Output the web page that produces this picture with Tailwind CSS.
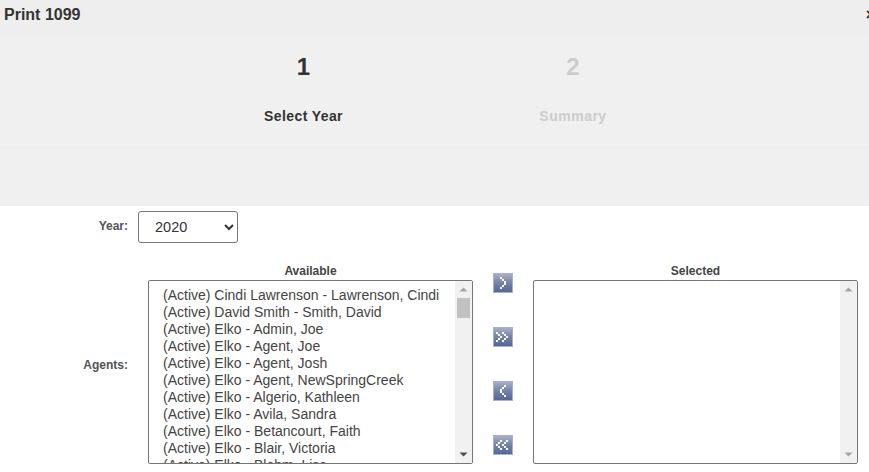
<!DOCTYPE html>
<html>
<head>
<meta charset="utf-8">
<script src="https://cdn.jsdelivr.net/npm/@tailwindcss/browser@4"></script>
</head>
<body class="bg-white overflow-hidden font-['Liberation_Sans',Arial,sans-serif] text-[#333]">
<div class="h-[472px] w-[869px] overflow-hidden">
  <header class="flex h-[35px] items-start justify-between bg-[#eeeeee] pl-1 pt-[5px]">
    <h1 class="text-base/[19px] font-bold text-[#333]">Print 1099</h1>
    <span class="mr-[-6px] text-base/[19px] font-bold text-[#333]">×</span>
  </header>
  <section class="h-[171px] bg-[#f0f0f0]">
    <div class="flex h-[110px] border-b border-[#f3f3f3] pl-[168px] pt-[18px]">
      <div class="flex w-[271px] flex-col items-center">
        <div class="text-2xl/[28px] font-bold text-[#333]">1</div>
        <div class="mt-[27px] text-sm/[16px] font-bold tracking-[0.4px] text-[#333]">Select Year</div>
      </div>
      <div class="flex w-[268px] flex-col items-center">
        <div class="text-2xl/[28px] font-bold text-[#cccccc]">2</div>
        <div class="mt-[27px] text-sm/[16px] font-bold tracking-[0.5px] text-[#cccccc]">Summary</div>
      </div>
    </div>
  </section>
  <div class="mt-[5px] flex h-[32px] items-center">
    <label class="w-[128px] pb-[3px] text-right text-xs font-bold text-[#555]">Year:</label>
    <select class="ml-[10px] h-[32px] w-[100px] rounded-[3px] border border-[#767676] bg-white pl-3 text-[14.5px] text-[#333]">
      <option>2020</option>
    </select>
  </div>
  <div class="mt-[21px] flex">
    <div class="w-[128px] pt-[93px] text-right text-xs font-bold text-[#555]">Agents:</div>
    <div class="ml-[20px] w-[325px]">
      <div class="h-[16px] text-center text-xs/[14px] font-bold text-[#444]">Available</div>
      <div class="flex h-[184px] w-[325px] overflow-hidden rounded-[2px] border border-[#767676] bg-white">
        <ul class="min-w-0 flex-1 overflow-hidden pl-[14px] pt-[6px] text-sm/[17px] whitespace-nowrap text-[#444]">
          <li>(Active) Cindi Lawrenson - Lawrenson, Cindi</li>
          <li>(Active) David Smith - Smith, David</li>
          <li>(Active) Elko - Admin, Joe</li>
          <li>(Active) Elko - Agent, Joe</li>
          <li>(Active) Elko - Agent, Josh</li>
          <li>(Active) Elko - Agent, NewSpringCreek</li>
          <li>(Active) Elko - Algerio, Kathleen</li>
          <li>(Active) Elko - Avila, Sandra</li>
          <li>(Active) Elko - Betancourt, Faith</li>
          <li>(Active) Elko - Blair, Victoria</li>
          <li>(Active) Elko - Blehm, Lisa</li>
        </ul>
        <div class="relative flex w-[17px] flex-col items-center bg-[#f1f1f1]">
          <svg class="mt-[6px]" width="9" height="5" viewBox="0 0 9 5"><path d="M4.5 0.5 L8.5 4.5 L0.5 4.5 Z" fill="#a3a3a3"/></svg>
          <div class="mt-[6px] h-[20px] w-[13px] bg-[#c1c1c1]"></div>
          <svg class="mt-auto mb-[6px]" width="9" height="5" viewBox="0 0 9 5"><path d="M0.5 0.5 L8.5 0.5 L4.5 4.5 Z" fill="#505050"/></svg>
        </div>
      </div>
    </div>
    <div class="flex w-[60px] flex-col items-center gap-[34px] pt-[9px]">
      <button class="flex size-5 items-center justify-center border border-[#a9b1c8] bg-linear-to-b from-[#a8afc4] via-[#7482a8] to-[#55669a]">
        <svg width="10" height="12" viewBox="0 0 10 12" shape-rendering="crispEdges" fill="#fff"><path d="M2 0h2v2h-2zM4 2h2v2h-2zM6 4h2v2h-2zM6 6h2v2h-2zM4 8h2v2h-2zM2 10h2v2h-2z"/></svg>
      </button>
      <button class="flex size-5 items-center justify-center border border-[#a9b1c8] bg-linear-to-b from-[#a8afc4] via-[#7482a8] to-[#55669a]">
        <svg width="14" height="10" viewBox="0 0 14 10" shape-rendering="crispEdges" fill="#fff"><path d="M0 0h2v2h-2zM2 2h2v2h-2zM4 4h2v2h-2zM2 6h2v2h-2zM0 8h2v2h-2zM6 0h2v2h-2zM8 2h2v2h-2zM10 4h2v2h-2zM8 6h2v2h-2zM6 8h2v2h-2z"/></svg>
      </button>
      <button class="flex size-5 items-center justify-center border border-[#a9b1c8] bg-linear-to-b from-[#a8afc4] via-[#7482a8] to-[#55669a]">
        <svg width="10" height="12" viewBox="0 0 10 12" shape-rendering="crispEdges" fill="#fff"><path d="M6 0h2v2h-2zM4 2h2v2h-2zM2 4h2v2h-2zM2 6h2v2h-2zM4 8h2v2h-2zM6 10h2v2h-2z"/></svg>
      </button>
      <button class="flex size-5 items-center justify-center border border-[#a9b1c8] bg-linear-to-b from-[#a8afc4] via-[#7482a8] to-[#55669a]">
        <svg width="14" height="10" viewBox="0 0 14 10" shape-rendering="crispEdges" fill="#fff"><path d="M4 0h2v2h-2zM2 2h2v2h-2zM0 4h2v2h-2zM2 6h2v2h-2zM4 8h2v2h-2zM10 0h2v2h-2zM8 2h2v2h-2zM6 4h2v2h-2zM8 6h2v2h-2zM10 8h2v2h-2z"/></svg>
      </button>
    </div>
    <div class="w-[325px]">
      <div class="h-[16px] text-center text-xs/[14px] font-bold text-[#444]">Selected</div>
      <div class="flex h-[184px] w-[325px] overflow-hidden rounded-[2px] border border-[#767676] bg-white">
        <div class="flex-1"></div>
        <div class="flex w-[17px] flex-col items-center bg-[#f1f1f1]">
          <svg class="mt-[6px]" width="9" height="5" viewBox="0 0 9 5"><path d="M4.5 0.5 L8.5 4.5 L0.5 4.5 Z" fill="#a3a3a3"/></svg>
          <svg class="mt-auto mb-[6px]" width="9" height="5" viewBox="0 0 9 5"><path d="M0.5 0.5 L8.5 0.5 L4.5 4.5 Z" fill="#a3a3a3"/></svg>
        </div>
      </div>
    </div>
  </div>
</div>
</body>
</html>
